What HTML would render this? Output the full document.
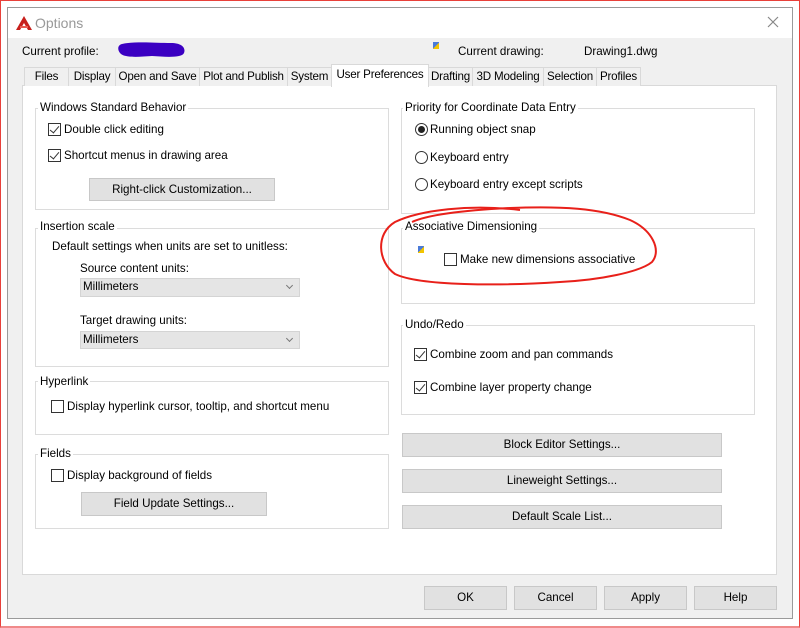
<!DOCTYPE html>
<html><head><style>
*{margin:0;padding:0;box-sizing:border-box}
body{width:800px;height:628px;background:#fff;position:relative;overflow:hidden;font-family:"Liberation Sans",sans-serif;font-size:11.6px;color:#000}
.a{position:absolute;white-space:nowrap}
.box{position:absolute;border:1px solid #dcdcdc}
.lg{position:absolute;background:#fff;padding:0 2px;line-height:14px;white-space:nowrap}
.cb{position:absolute;width:13px;height:13px;border:1px solid #333;background:#fff}
.cb.c::after{content:"";position:absolute;left:3px;top:0px;width:4px;height:8px;border:solid #333;border-width:0 1.5px 1.5px 0;transform:rotate(40deg)}
.rb{position:absolute;width:13px;height:13px;border:1px solid #333;border-radius:50%;background:#fff}
.rb.c::after{content:"";position:absolute;left:2px;top:2px;width:7px;height:7px;border-radius:50%;background:#222}
.btn{position:absolute;background:#e1e1e1;border:1px solid #c8c8c8;text-align:center;line-height:21px;white-space:nowrap}
.sel{position:absolute;background:#e5e5e5;border:1px solid #d4d4d4;line-height:16px;padding-left:2px}
.sel::after{content:"";position:absolute;right:7px;top:4px;width:4px;height:4px;border:solid #777;border-width:0 1px 1px 0;transform:rotate(45deg)}
.tab{position:absolute;top:67px;height:19px;background:#f0f0f0;border:1px solid #d9d9d9;border-bottom:none;line-height:18px;text-align:center;white-space:nowrap;overflow:visible;letter-spacing:-0.2px}
</style></head><body>
<div class="a" style="left:0;top:0;width:800px;height:628px;border:1px solid #e8403a;border-bottom:2px solid #f08a8a"></div>
<div class="a" style="left:7px;top:7px;width:786px;height:612px;border:1px solid #9a9a9a;background:#f0f0f0"></div>
<div class="a" style="left:8px;top:8px;width:784px;height:30px;background:#fff"></div>
<svg class="a" style="left:15px;top:15px" width="18" height="16"><path d="M9 1 L17 15 L13 15 L9 8 L5 15 L1 15 Z" fill="#c8201c"/><path d="M5 12 L13 12" stroke="#e85a50" stroke-width="2"/></svg>
<div class="a" style="left:35px;top:15px;font-size:14px;color:#999">Options</div>
<svg class="a" style="left:767px;top:16px" width="12" height="12"><path d="M1 1L11 11M11 1L1 11" stroke="#888" stroke-width="1.2"/></svg>
<div class="a" style="left:22px;top:45px">Current profile:</div>
<svg class="a" style="left:116px;top:40px" width="72" height="20"><path d="M6 4 C20 1 40 3 55 3 C66 3 70 8 68 13 C66 18 50 17 36 16 C22 17 8 18 4 13 C1 9 2 5 6 4Z" fill="#3b00c2"/></svg>
<div class="a" style="left:433px;top:42px;width:6px;height:7px;background:linear-gradient(135deg,#4a7ad8 50%,#f2c400 50%)"></div>
<div class="a" style="left:458px;top:45px">Current drawing:</div>
<div class="a" style="left:584px;top:45px">Drawing1.dwg</div>
<div class="a" style="left:22px;top:85px;width:755px;height:490px;background:#fff;border:1px solid #d9d9d9"></div>
<div class="tab" style="left:24px;width:45px">Files</div>
<div class="tab" style="left:68px;width:48px">Display</div>
<div class="tab" style="left:115px;width:85px">Open and Save</div>
<div class="tab" style="left:199px;width:89px">Plot and Publish</div>
<div class="tab" style="left:287px;width:45px">System</div>
<div class="tab" style="left:331px;top:64px;height:23px;width:98px;background:#fff;line-height:20px">User Preferences</div>
<div class="tab" style="left:428px;width:45px">Drafting</div>
<div class="tab" style="left:472px;width:72px">3D Modeling</div>
<div class="tab" style="left:543px;width:54px">Selection</div>
<div class="tab" style="left:596px;width:45px">Profiles</div>

<div class="box" style="left:35px;top:108px;width:354px;height:102px"></div>
<div class="lg" style="left:38px;top:101px">Windows Standard Behavior</div>
<div class="cb c" style="left:48px;top:123px"></div><div class="a" style="left:64px;top:123px">Double click editing</div>
<div class="cb c" style="left:48px;top:149px"></div><div class="a" style="left:64px;top:149px">Shortcut menus in drawing area</div>
<div class="btn" style="left:89px;top:178px;width:186px">Right-click Customization...</div>

<div class="box" style="left:35px;top:228px;width:354px;height:139px"></div>
<div class="lg" style="left:38px;top:220px">Insertion scale</div>
<div class="a" style="left:52px;top:240px">Default settings when units are set to unitless:</div>
<div class="a" style="left:80px;top:262px">Source content units:</div>
<div class="sel" style="left:80px;top:278px;width:220px;height:19px">Millimeters</div>
<div class="a" style="left:80px;top:314px">Target drawing units:</div>
<div class="sel" style="left:80px;top:331px;width:220px;height:18px">Millimeters</div>

<div class="box" style="left:35px;top:381px;width:354px;height:54px"></div>
<div class="lg" style="left:38px;top:375px">Hyperlink</div>
<div class="cb" style="left:51px;top:400px"></div><div class="a" style="left:67px;top:400px">Display hyperlink cursor, tooltip, and shortcut menu</div>

<div class="box" style="left:35px;top:454px;width:354px;height:75px"></div>
<div class="lg" style="left:38px;top:447px">Fields</div>
<div class="cb" style="left:51px;top:469px"></div><div class="a" style="left:67px;top:469px">Display background of fields</div>
<div class="btn" style="left:81px;top:492px;width:186px;height:24px">Field Update Settings...</div>

<div class="box" style="left:401px;top:108px;width:354px;height:106px"></div>
<div class="lg" style="left:403px;top:101px">Priority for Coordinate Data Entry</div>
<div class="rb c" style="left:415px;top:123px"></div><div class="a" style="left:430px;top:123px">Running object snap</div>
<div class="rb" style="left:415px;top:151px"></div><div class="a" style="left:430px;top:151px">Keyboard entry</div>
<div class="rb" style="left:415px;top:178px"></div><div class="a" style="left:430px;top:178px">Keyboard entry except scripts</div>

<div class="box" style="left:401px;top:228px;width:354px;height:76px"></div>
<div class="lg" style="left:403px;top:220px">Associative Dimensioning</div>
<div class="a" style="left:418px;top:246px;width:6px;height:7px;background:linear-gradient(135deg,#4a7ad8 50%,#f2c400 50%)"></div>
<div class="cb" style="left:444px;top:253px"></div><div class="a" style="left:460px;top:253px">Make new dimensions associative</div>

<div class="box" style="left:401px;top:325px;width:354px;height:90px"></div>
<div class="lg" style="left:403px;top:318px">Undo/Redo</div>
<div class="cb c" style="left:414px;top:348px"></div><div class="a" style="left:430px;top:348px">Combine zoom and pan commands</div>
<div class="cb c" style="left:414px;top:381px"></div><div class="a" style="left:430px;top:381px">Combine layer property change</div>

<div class="btn" style="left:402px;top:433px;width:320px;height:24px">Block Editor Settings...</div>
<div class="btn" style="left:402px;top:469px;width:320px;height:24px">Lineweight Settings...</div>
<div class="btn" style="left:402px;top:505px;width:320px;height:24px">Default Scale List...</div>

<div class="btn" style="left:424px;top:586px;width:83px;height:24px">OK</div>
<div class="btn" style="left:514px;top:586px;width:83px;height:24px">Cancel</div>
<div class="btn" style="left:604px;top:586px;width:83px;height:24px">Apply</div>
<div class="btn" style="left:694px;top:586px;width:83px;height:24px">Help</div>

<svg class="a" style="left:0;top:0" width="800" height="628"><path d="M520 210 C470 204 420 210 395 222 C375 234 378 262 395 274 C420 286 500 286 560 282 C600 280 640 272 652 262 C662 250 652 230 630 220 C600 208 560 206 510 208 C470 210 430 214 412 222" fill="none" stroke="#e8201a" stroke-width="2"/></svg>
</body></html>
